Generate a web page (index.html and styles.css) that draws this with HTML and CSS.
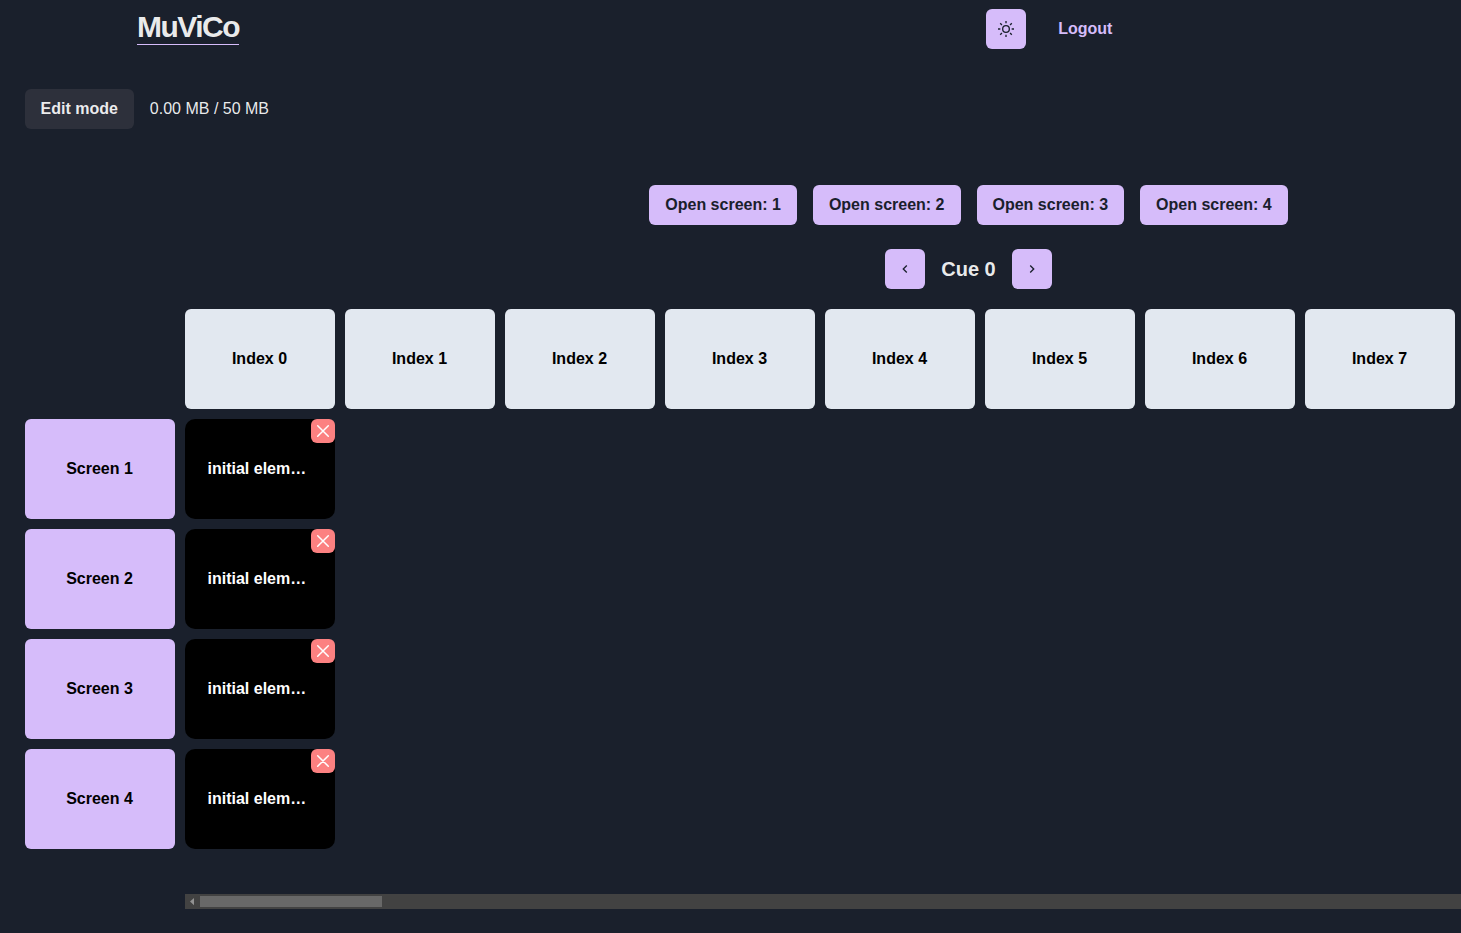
FILE: index.html
```html
<!DOCTYPE html>
<html lang="en">
<head>
<meta charset="utf-8">
<title>MuViCo</title>
<link rel="stylesheet" href="styles.css">
</head>
<body>
<nav class="navbar">
  <a class="logo">MuViCo</a>
  <div class="nav-actions">
    <button class="btn icon-btn" aria-label="Toggle theme">
      <svg width="16" height="16" viewBox="0 0 24 24" fill="none" stroke="currentColor" stroke-width="2" stroke-linejoin="round"><circle cx="12" cy="12" r="5"/><path d="M12 0v3.5M12 20.5v3.5M0 12h3.5M20.5 12h3.5M3.3 3.3l2.6 2.6M18.1 18.1l2.6 2.6M3.3 20.7l2.6-2.6M18.1 5.9l2.6-2.6"/></svg>
    </button>
    <a class="logout">Logout</a>
  </div>
</nav>
<main class="viewport">
  <div class="page">
    <div class="toolbar">
      <button class="btn btn-muted">Edit mode</button>
      <span class="quota">0.00 MB / 50 MB</span>
    </div>
    <div class="screens">
      <button class="btn">Open screen: 1</button>
      <button class="btn">Open screen: 2</button>
      <button class="btn">Open screen: 3</button>
      <button class="btn">Open screen: 4</button>
    </div>
    <div class="cue-nav">
      <button class="btn icon-btn" aria-label="Previous cue"><svg width="16" height="16" viewBox="0 0 24 24" fill="currentColor"><path d="M15.41 7.41 14 6l-6 6 6 6 1.41-1.41L10.83 12z"/></svg></button>
      <h2 class="cue-title">Cue 0</h2>
      <button class="btn icon-btn" aria-label="Next cue"><svg width="16" height="16" viewBox="0 0 24 24" fill="currentColor"><path d="M10 6 8.59 7.41 13.17 12l-4.58 4.59L10 18l6-6z"/></svg></button>
    </div>
    <div class="editor">
      <div class="labels">
        <div class="cell screen">Screen 1</div>
        <div class="cell screen">Screen 2</div>
        <div class="cell screen">Screen 3</div>
        <div class="cell screen">Screen 4</div>
      </div>
      <div class="timeline">
        <div class="row">
          <div class="cell index">Index 0</div>
          <div class="cell index">Index 1</div>
          <div class="cell index">Index 2</div>
          <div class="cell index">Index 3</div>
          <div class="cell index">Index 4</div>
          <div class="cell index">Index 5</div>
          <div class="cell index">Index 6</div>
          <div class="cell index">Index 7</div>
        </div>
        <div class="cell media"><span class="media-name">initial elem…</span><button class="remove" aria-label="Remove"><svg width="14" height="14" viewBox="0 0 14 14"><path d="M1.7 1.7l10.6 10.6M12.3 1.7L1.7 12.3"/></svg></button></div>
        <div class="cell media"><span class="media-name">initial elem…</span><button class="remove" aria-label="Remove"><svg width="14" height="14" viewBox="0 0 14 14"><path d="M1.7 1.7l10.6 10.6M12.3 1.7L1.7 12.3"/></svg></button></div>
        <div class="cell media"><span class="media-name">initial elem…</span><button class="remove" aria-label="Remove"><svg width="14" height="14" viewBox="0 0 14 14"><path d="M1.7 1.7l10.6 10.6M12.3 1.7L1.7 12.3"/></svg></button></div>
        <div class="cell media"><span class="media-name">initial elem…</span><button class="remove" aria-label="Remove"><svg width="14" height="14" viewBox="0 0 14 14"><path d="M1.7 1.7l10.6 10.6M12.3 1.7L1.7 12.3"/></svg></button></div>
        <div class="scrollbar">
          <svg class="scroll-arrow" width="15" height="15" viewBox="0 0 15 15"><path d="M9 4v7.2L5 7.6z"/></svg>
          <div class="scroll-thumb"></div>
        </div>
      </div>
    </div>
  </div>
</main>
</body>
</html>
```
FILE: styles.css
```css
* { box-sizing: border-box; margin: 0; }
body {
  height: 933px;
  overflow: hidden;
  background: #1a202c;
  color: rgba(255, 255, 255, 0.92);
  font: 16px/24px "Liberation Sans", Arial, sans-serif;
}
.navbar {
  display: flex;
  justify-content: space-between;
  align-items: flex-start;
  height: 57px;
  padding: 9px 348.6px 0 137px;
}
.logo {
  height: 36px;
  border-bottom: 1px solid #d6bcfa;
  font-size: 30px;
  font-weight: 700;
  line-height: 36px;
  letter-spacing: -1.5px;
}
.nav-actions { display: flex; align-items: center; gap: 32px; }
.logout { color: #d6bcfa; font-weight: 700; }
.btn {
  display: inline-flex;
  align-items: center;
  justify-content: center;
  height: 40px;
  padding: 0 16px;
  border: 0;
  border-radius: 6px;
  background: #d6bcfa;
  color: #1a202c;
  font: 700 16px/20px "Liberation Sans", Arial, sans-serif;
}
.icon-btn { width: 40px; padding: 0; }
.btn-muted {
  padding: 0 16.5px 0 15.5px;
  background: #2d303b;
  color: rgba(255, 255, 255, 0.92);
}
.viewport { overflow: hidden; }
.page { width: 1912px; padding: 32px 0 0 25px; }
.toolbar { display: flex; align-items: center; gap: 15.5px; }
.screens { display: flex; justify-content: center; gap: 16px; margin-top: 56px; }
.cue-nav { display: flex; align-items: center; justify-content: center; gap: 16px; margin-top: 24px; }
.cue-title { font-size: 20px; line-height: 24px; }
.editor { display: flex; gap: 10px; margin-top: 20px; }
.labels { display: flex; flex-direction: column; gap: 10px; padding-top: 110px; }
.timeline { display: flex; flex-direction: column; gap: 10px; }
.row { display: flex; gap: 10px; }
.cell {
  display: flex;
  align-items: center;
  justify-content: center;
  width: 150px;
  height: 100px;
  border-radius: 6px;
  color: #000;
  font-weight: 700;
}
.screen, .index { padding-right: 1px; }
.screen { background: #d6bcfa; }
.index { background: #e2e8f0; }
.media { position: relative; border-radius: 10px; background: #000; color: #fff; }
.media-name { width: 105px; }
.remove {
  position: absolute;
  top: 0;
  right: 0;
  display: flex;
  align-items: center;
  justify-content: center;
  width: 24px;
  height: 24px;
  padding: 0;
  border: 0;
  border-radius: 6px;
  background: #fc8181;
}
.remove path { stroke: #fff; stroke-width: 1.5; stroke-linecap: round; }
.scrollbar {
  display: flex;
  align-items: center;
  width: 1727px;
  height: 15px;
  margin-top: 35px;
  background: #424242;
}
.scroll-arrow { fill: #929292; }
.scroll-thumb { width: 182px; height: 11px; background: #686868; }
```
